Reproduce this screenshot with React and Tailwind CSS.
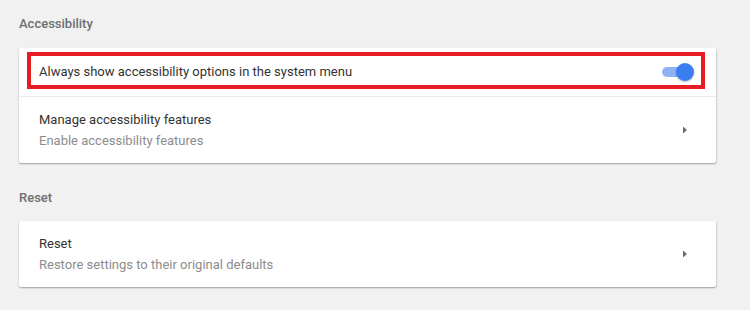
import React from 'react'

const font = { fontFamily: 'Roboto, "Liberation Sans", sans-serif' }

function Arrow() {
  return (
    <svg width="8" height="10" viewBox="0 0 8 10" className="shrink-0">
      <path d="M2 1.5 L6 5 L2 8.5 Z" fill="#6b6b6b" />
    </svg>
  )
}

function Toggle() {
  return (
    <div className="relative h-[18px] w-[32px] shrink-0">
      <div className="absolute left-0 top-[4px] h-[10px] w-[28px] rounded-full bg-[#8db3f5]" />
      <div className="absolute right-0 top-0 h-[18px] w-[18px] rounded-full bg-[#3b7ef0] shadow-[0_1px_2px_rgba(0,0,0,0.25)]" />
    </div>
  )
}

function SectionTitle({ children }) {
  return (
    <div className="h-[20px] text-[13px] font-medium leading-[20px] text-[#6f6f6f]">{children}</div>
  )
}

function LinkRow({ title, sub }) {
  return (
    <div className="flex h-[66px] items-center justify-between pl-[20px] pr-[27px]">
      <div>
        <div className="text-[13px] leading-[20px] text-[#333333]">{title}</div>
        <div className="text-[13px] leading-[21px] text-[#8c8c8c]">{sub}</div>
      </div>
      <Arrow />
    </div>
  )
}

export default function App() {
  return (
    <div className="h-[310px] w-[750px] overflow-hidden bg-[#f1f1f1] pl-[19px] pr-[34px] pt-[14px]" style={font}>
      <SectionTitle>Accessibility</SectionTitle>
      <div className="mt-[14px] rounded-[2px] bg-white shadow-[0_1px_2px_rgba(0,0,0,0.28),1px_1px_1px_rgba(0,0,0,0.08)]">
        <div className="relative flex h-[49px] items-center justify-between border-b border-[#ebebeb] pl-[20px] pr-[22px]">
          <span className="text-[13px] leading-[20px] text-[#333333]">
            Always show accessibility options in the system menu
          </span>
          <Toggle />
          <div className="pointer-events-none absolute bottom-[7px] left-[8px] right-[11px] top-[4px] border-[4px] border-[#e81c27]" />
        </div>
        <LinkRow title="Manage accessibility features" sub="Enable accessibility features" />
      </div>
      <div className="mt-[25px]">
        <SectionTitle>Reset</SectionTitle>
      </div>
      <div className="mt-[13px] rounded-[2px] bg-white shadow-[0_1px_2px_rgba(0,0,0,0.28),1px_1px_1px_rgba(0,0,0,0.08)]">
        <LinkRow title="Reset" sub="Restore settings to their original defaults" />
      </div>
    </div>
  )
}
